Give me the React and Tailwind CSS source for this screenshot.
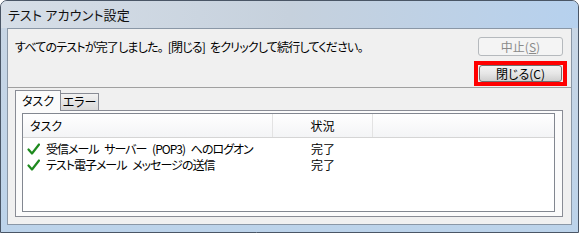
import React from "react";

const ui = "font-['Noto_Sans_CJK_JP','Noto_Sans',sans-serif] [font-feature-settings:'palt']";

const Check = () => (
  <svg width="13" height="12" viewBox="0 0 13 12" className="shrink-0">
    <path d="M1.5 6.5 L5 10.5 L12 1.5" fill="none" stroke="#1e8a1e" strokeWidth="2.2" strokeLinecap="round" strokeLinejoin="round" />
  </svg>
);

const tasks = [
  { name: "受信メール サーバー (POP3) へのログオン", status: "完了" },
  { name: "テスト電子メール メッセージの送信", status: "完了" },
];

export default function App() {
  return (
    <div className={`w-[580px] h-[234px] ${ui} text-[12px] leading-none text-black bg-white`}>
      <div className="w-[579px] h-[233px] flex flex-col rounded-t-[7px] border border-[#4a5666] bg-gradient-to-b from-[#c9d6e4] to-[#bcd3ea]">
        {/* title bar */}
        <div className="h-[27px] shrink-0 flex items-center pl-[7px] rounded-t-[6px] bg-gradient-to-r from-[#d6dee7] via-[#c6d1dd] to-[#b6d1ee]">
          <span className="text-[13px] tracking-[0.2px] text-[#111]">テスト アカウント設定</span>
        </div>

        {/* client area */}
        <div className="mx-[6px] h-[197px] shrink-0 flex flex-col border border-[#8a97a6] bg-[#f0f0f0]">
          <div className="flex items-center justify-between pl-[7px] pr-[8px] pt-[8px]">
            <span className="tracking-[-0.8px] [word-spacing:3px]">すべてのテストが完了しました。 [閉じる] をクリックして続行してください。</span>
            <div className="w-[85px] h-[19px] flex items-center justify-center rounded-[3px] border border-[#b5b9bd] bg-[#f4f4f4] text-[#8a8a8a]">
              中止(<span className="underline">S</span>)
            </div>
          </div>
          <div className="flex justify-end pr-[4px] mt-[5px]">
            <div className="w-[93px] h-[25px] border-4 border-[#ff0000] px-[1px]">
              <div className="h-[17px] flex items-center justify-center rounded-[3px] border border-[#707070] bg-gradient-to-b from-[#f3f3f3] via-[#e6e6e6] to-[#cfcfcf]">
                閉じる(C)
              </div>
            </div>
          </div>
          <div className="h-px bg-[#a0a0a0] mt-px" />

          {/* tabs */}
          <div className="pl-[7px] pr-[8px] mt-[2px] flex flex-col">
            <div className="flex items-end h-[20px]">
              <div className="relative z-10 w-[46px] h-[21px] -mb-px flex items-center justify-center border border-b-0 border-[#898c95] bg-[#fbfbfb]">
                タスク
              </div>
              <div className="w-[38px] h-[17px] flex items-center justify-center border border-l-0 border-b-0 border-[#898c95] bg-gradient-to-b from-[#f2f2f2] to-[#d9d9d9]">
                エラー
              </div>
            </div>
            <div className="h-[107px] border border-[#898c95] bg-[#fbfbfb] pt-[2px] pl-[6px] pr-[7px]">
              <div className="h-[99px] border border-[#828790] bg-white flex flex-col">
                <div className="h-[24px] flex border-b border-[#d5d5d5] bg-gradient-to-b from-white to-[#f3f4f6]">
                  <div className="w-[250px] flex items-center pl-[7px] border-r border-[#e3e3e3]">タスク</div>
                  <div className="w-[100px] flex items-center justify-center border-r border-[#e3e3e3]">状況</div>
                </div>
                <div className="pt-[3px] flex flex-col">
                  {tasks.map((t) => (
                    <div key={t.name} className="h-[16px] flex items-center">
                      <div className="w-[250px] flex items-center gap-[6px] pl-[4px]">
                        <Check />
                        <span className="tracking-[-1px] [word-spacing:4px]">{t.name}</span>
                      </div>
                      <div className="w-[100px] text-center">{t.status}</div>
                    </div>
                  ))}
                </div>
              </div>
            </div>
          </div>
        </div>
      </div>
    </div>
  );
}
